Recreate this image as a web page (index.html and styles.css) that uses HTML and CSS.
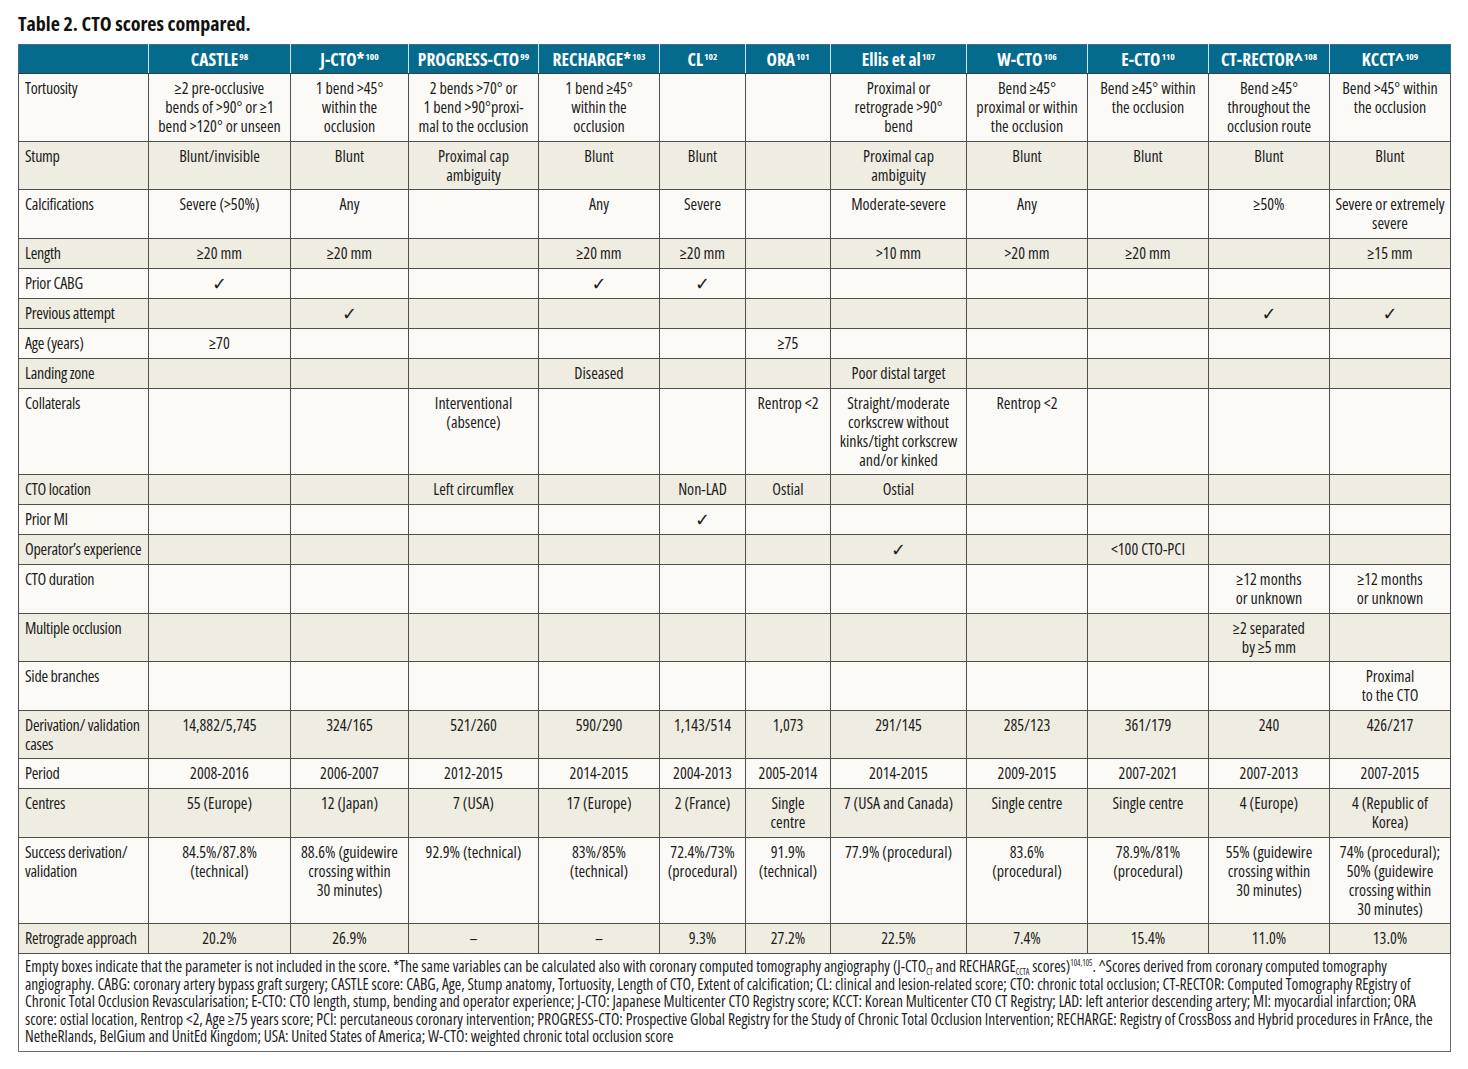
FILE: index.html
```html
<!DOCTYPE html>
<html lang="en">
<head>
<meta charset="utf-8">
<title>Table 2. CTO scores compared.</title>
<link rel="stylesheet" href="styles.css">
</head>
<body>
<div class="page">
  <h1 class="title">Table 2. CTO scores compared.</h1>
  <table class="scores">
    <colgroup>
      <col class="c-label"><col class="c1"><col class="c2"><col class="c3"><col class="c4"><col class="c5"><col class="c6"><col class="c7"><col class="c8"><col class="c9"><col class="c10"><col class="c11">
    </colgroup>
    <thead>
      <tr>
        <th></th>
        <th>CASTLE<sup>98</sup></th>
        <th>J-CTO*<sup>100</sup></th>
        <th>PROGRESS-CTO<sup>99</sup></th>
        <th>RECHARGE*<sup>103</sup></th>
        <th>CL<sup>102</sup></th>
        <th>ORA<sup>101</sup></th>
        <th>Ellis et al<sup>107</sup></th>
        <th>W-CTO<sup>106</sup></th>
        <th>E-CTO<sup>110</sup></th>
        <th>CT-RECTOR^<sup>108</sup></th>
        <th>KCCT^<sup>109</sup></th>
      </tr>
    </thead>
    <tbody>
      <tr class="light">
        <td>Tortuosity</td>
        <td>≥2 pre-occlusive<br>bends of &gt;90° or ≥1<br>bend &gt;120° or unseen</td>
        <td>1 bend &gt;45°<br>within the<br>occlusion</td>
        <td>2 bends &gt;70° or<br>1 bend &gt;90°proxi-<br>mal to the occlusion</td>
        <td>1 bend ≥45°<br>within the<br>occlusion</td>
        <td></td>
        <td></td>
        <td>Proximal or<br>retrograde &gt;90°<br>bend</td>
        <td>Bend ≥45°<br>proximal or within<br>the occlusion</td>
        <td>Bend ≥45° within<br>the occlusion</td>
        <td>Bend ≥45°<br>throughout the<br>occlusion route</td>
        <td>Bend &gt;45° within<br>the occlusion</td>
      </tr>
      <tr class="dark">
        <td>Stump</td>
        <td>Blunt/invisible</td>
        <td>Blunt</td>
        <td>Proximal cap<br>ambiguity</td>
        <td>Blunt</td>
        <td>Blunt</td>
        <td></td>
        <td>Proximal cap<br>ambiguity</td>
        <td>Blunt</td>
        <td>Blunt</td>
        <td>Blunt</td>
        <td>Blunt</td>
      </tr>
      <tr class="light">
        <td>Calcifications</td>
        <td>Severe (&gt;50%)</td>
        <td>Any</td>
        <td></td>
        <td>Any</td>
        <td>Severe</td>
        <td></td>
        <td>Moderate-severe</td>
        <td>Any</td>
        <td></td>
        <td>≥50%</td>
        <td>Severe or extremely<br>severe</td>
      </tr>
      <tr class="dark">
        <td>Length</td>
        <td>≥20 mm</td>
        <td>≥20 mm</td>
        <td></td>
        <td>≥20 mm</td>
        <td>≥20 mm</td>
        <td></td>
        <td>&gt;10 mm</td>
        <td>&gt;20 mm</td>
        <td>≥20 mm</td>
        <td></td>
        <td>≥15 mm</td>
      </tr>
      <tr class="light">
        <td>Prior CABG</td>
        <td class="check">✓</td>
        <td></td>
        <td></td>
        <td class="check">✓</td>
        <td class="check">✓</td>
        <td></td><td></td><td></td><td></td><td></td><td></td>
      </tr>
      <tr class="dark">
        <td>Previous attempt</td>
        <td></td>
        <td class="check">✓</td>
        <td></td><td></td><td></td><td></td><td></td><td></td><td></td>
        <td class="check">✓</td>
        <td class="check">✓</td>
      </tr>
      <tr class="light">
        <td>Age (years)</td>
        <td>≥70</td>
        <td></td><td></td><td></td><td></td>
        <td>≥75</td>
        <td></td><td></td><td></td><td></td><td></td>
      </tr>
      <tr class="dark">
        <td>Landing zone</td>
        <td></td><td></td><td></td>
        <td>Diseased</td>
        <td></td><td></td>
        <td>Poor distal target</td>
        <td></td><td></td><td></td><td></td>
      </tr>
      <tr class="light">
        <td>Collaterals</td>
        <td></td><td></td>
        <td>Interventional<br>(absence)</td>
        <td></td><td></td>
        <td>Rentrop &lt;2</td>
        <td>Straight/moderate<br>corkscrew without<br>kinks/tight corkscrew<br>and/or kinked</td>
        <td>Rentrop &lt;2</td>
        <td></td><td></td><td></td>
      </tr>
      <tr class="dark">
        <td>CTO location</td>
        <td></td><td></td>
        <td>Left circumflex</td>
        <td></td>
        <td>Non-LAD</td>
        <td>Ostial</td>
        <td>Ostial</td>
        <td></td><td></td><td></td><td></td>
      </tr>
      <tr class="light">
        <td>Prior MI</td>
        <td></td><td></td><td></td><td></td>
        <td class="check">✓</td>
        <td></td><td></td><td></td><td></td><td></td><td></td>
      </tr>
      <tr class="dark">
        <td>Operator’s experience</td>
        <td></td><td></td><td></td><td></td><td></td><td></td>
        <td class="check">✓</td>
        <td></td>
        <td>&lt;100 CTO-PCI</td>
        <td></td><td></td>
      </tr>
      <tr class="light">
        <td>CTO duration</td>
        <td></td><td></td><td></td><td></td><td></td><td></td><td></td><td></td><td></td>
        <td>≥12 months<br>or unknown</td>
        <td>≥12 months<br>or unknown</td>
      </tr>
      <tr class="dark">
        <td>Multiple occlusion</td>
        <td></td><td></td><td></td><td></td><td></td><td></td><td></td><td></td><td></td>
        <td>≥2 separated<br>by ≥5 mm</td>
        <td></td>
      </tr>
      <tr class="light">
        <td>Side branches</td>
        <td></td><td></td><td></td><td></td><td></td><td></td><td></td><td></td><td></td><td></td>
        <td>Proximal<br>to the CTO</td>
      </tr>
      <tr class="dark">
        <td>Derivation/ validation<br>cases</td>
        <td>14,882/5,745</td>
        <td>324/165</td>
        <td>521/260</td>
        <td>590/290</td>
        <td>1,143/514</td>
        <td>1,073</td>
        <td>291/145</td>
        <td>285/123</td>
        <td>361/179</td>
        <td>240</td>
        <td>426/217</td>
      </tr>
      <tr class="light">
        <td>Period</td>
        <td>2008-2016</td>
        <td>2006-2007</td>
        <td>2012-2015</td>
        <td>2014-2015</td>
        <td>2004-2013</td>
        <td>2005-2014</td>
        <td>2014-2015</td>
        <td>2009-2015</td>
        <td>2007-2021</td>
        <td>2007-2013</td>
        <td>2007-2015</td>
      </tr>
      <tr class="dark">
        <td>Centres</td>
        <td>55 (Europe)</td>
        <td>12 (Japan)</td>
        <td>7 (USA)</td>
        <td>17 (Europe)</td>
        <td>2 (France)</td>
        <td>Single<br>centre</td>
        <td>7 (USA and Canada)</td>
        <td>Single centre</td>
        <td>Single centre</td>
        <td>4 (Europe)</td>
        <td>4 (Republic of<br>Korea)</td>
      </tr>
      <tr class="light">
        <td>Success derivation/<br>validation</td>
        <td>84.5%/87.8%<br>(technical)</td>
        <td>88.6% (guidewire<br>crossing within<br>30 minutes)</td>
        <td>92.9% (technical)</td>
        <td>83%/85%<br>(technical)</td>
        <td>72.4%/73%<br>(procedural)</td>
        <td>91.9%<br>(technical)</td>
        <td>77.9% (procedural)</td>
        <td>83.6%<br>(procedural)</td>
        <td>78.9%/81%<br>(procedural)</td>
        <td>55% (guidewire<br>crossing within<br>30 minutes)</td>
        <td>74% (procedural);<br>50% (guidewire<br>crossing within<br>30 minutes)</td>
      </tr>
      <tr class="dark">
        <td>Retrograde approach</td>
        <td>20.2%</td>
        <td>26.9%</td>
        <td>–</td>
        <td>–</td>
        <td>9.3%</td>
        <td>27.2%</td>
        <td>22.5%</td>
        <td>7.4%</td>
        <td>15.4%</td>
        <td>11.0%</td>
        <td>13.0%</td>
      </tr>
    </tbody>
  </table>
  <p class="notes">Empty boxes indicate that the parameter is not included in the score. *The same variables can be calculated also with coronary computed tomography angiography (J-CTO<sub>CT</sub> and RECHARGE<sub>CCTA</sub> scores)<sup>104,105</sup>. ^Scores derived from coronary computed tomography<br>angiography. CABG: coronary artery bypass graft surgery; CASTLE score: CABG, Age, Stump anatomy, Tortuosity, Length of CTO, Extent of calcification; CL: clinical and lesion-related score; CTO: chronic total occlusion; CT-RECTOR: Computed Tomography REgistry of<br>Chronic Total Occlusion Revascularisation; E-CTO: CTO length, stump, bending and operator experience; J-CTO: Japanese Multicenter CTO Registry score; KCCT: Korean Multicenter CTO CT Registry; LAD: left anterior descending artery; MI: myocardial infarction; ORA<br>score: ostial location, Rentrop &lt;2, Age ≥75 years score; PCI: percutaneous coronary intervention; PROGRESS-CTO: Prospective Global Registry for the Study of Chronic Total Occlusion Intervention; RECHARGE: Registry of CrossBoss and Hybrid procedures in FrAnce, the<br>NetheRlands, BelGium and UnitEd Kingdom; USA: United States of America; W-CTO: weighted chronic total occlusion score</p>
</div>
</body>
</html>
```

FILE: styles.css
```css
html, body {
  margin: 0;
  padding: 0;
  background: #ffffff;
}

.page {
  padding: 12px 18px 0 18px;
  font-family: "Open Sans", "DejaVu Sans Condensed", sans-serif;
  font-stretch: 75%;
  color: #1c1c1c;
}

.title {
  margin: 0 0 8px 0;
  font-size: 20px;
  line-height: 24px;
  font-weight: bold;
  color: #111;
}

.scores {
  width: 1433px;
  table-layout: fixed;
  border-collapse: collapse;
  font-size: 16px;
  line-height: 19px;
}

.c-label { width: 130px; }
.c1 { width: 142px; }
.c2 { width: 118px; }
.c3 { width: 130px; }
.c4 { width: 121px; }
.c5 { width: 86px; }
.c6 { width: 85px; }
.c7 { width: 136px; }
.c8 { width: 121px; }
.c9 { width: 121px; }
.c10 { width: 121px; }
.c11 { width: 121px; }

.scores th {
  background: #056b8e;
  color: #ffffff;
  font-weight: bold;
  font-size: 17.5px;
  line-height: 20px;
  height: 28px;
  padding: 0 2px;
  text-align: center;
  vertical-align: middle;
  border-left: 1px solid #cfe3ea;
  border-right: 1px solid #cfe3ea;
  border-top: 1px solid #3f6f80;
  border-bottom: 1px solid #3c3c3c;
  white-space: nowrap;
}

.scores th:first-child {
  border-left: 1px solid #3f6f80;
}

.scores th:last-child {
  border-right: 1px solid #3f6f80;
}

.scores th sup {
  font-size: 9.5px;
  line-height: 0;
  vertical-align: 6px;
  margin-left: 1px;
}

.scores tbody tr {
  height: 30px;
}

.scores td {
  border: 1px solid #4f4f4f;
  padding: 5px 3px 4.5px 3px;
  text-align: center;
  vertical-align: top;
  overflow: hidden;
}

.scores td:first-child {
  text-align: left;
  padding-left: 6px;
  padding-right: 0;
  white-space: nowrap;
  letter-spacing: -0.25px;
}

.scores tr.light td {
  background: #fbfaf6;
}

.scores tr.dark td {
  background: #efece1;
}

.scores td.check {
  font-family: "DejaVu Sans", sans-serif;
  font-stretch: normal;
  font-size: 18px;
}

.notes {
  box-sizing: border-box;
  width: 1433px;
  margin: 0;
  padding: 4px 6px 5px 6px;
  border: 1px solid #6a6a6a;
  border-top: none;
  font-size: 15.5px;
  line-height: 17.5px;
  color: #1c1c1c;
  white-space: nowrap;
  overflow: hidden;
}

.notes sub {
  font-size: 8px;
  line-height: 0;
  vertical-align: -3px;
}

.notes sup {
  font-size: 8px;
  line-height: 0;
  vertical-align: 6px;
}
```
